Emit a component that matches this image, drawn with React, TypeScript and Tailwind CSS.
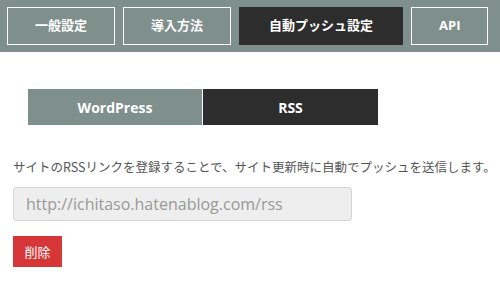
export default function App() {
  const tabs = ["一般設定", "導入方法", "自動プッシュ設定", "API"];
  const active = "自動プッシュ設定";

  return (
    <div className="w-[500px] h-[285px] bg-white font-['Open_Sans','Noto_Sans_CJK_JP',sans-serif]">
      {/* Top tabs */}
      <div className="h-[52px] bg-[#7f908c] flex gap-2 pl-[7px] pt-[7px]">
        {tabs.map((t) => (
          <div
            key={t}
            className={
              t === active
                ? "h-[38px] px-[30px] flex items-center bg-[#2d2d2d] text-white text-[13px] font-bold"
                : "h-[38px] px-[27px] flex items-center border border-white text-white text-[13px] font-bold"
            }
          >
            {t}
          </div>
        ))}
      </div>

      {/* Segmented control */}
      <div className="mt-[37px] ml-[28px] flex w-[350px] h-[36px]">
        <div className="w-[175px] flex items-center justify-center bg-[#7f908c] text-white text-[14px] font-bold border-r border-white">
          WordPress
        </div>
        <div className="flex-1 flex items-center justify-center bg-[#2d2d2d] text-white text-[14px] font-bold">
          RSS
        </div>
      </div>

      {/* RSS form */}
      <div className="px-[13px] pt-[32px]">
        <p className="text-[12.5px] leading-[20px] text-[#555] font-['Noto_Sans_CJK_JP',sans-serif] whitespace-nowrap">
          サイトのRSSリンクを登録することで、サイト更新時に自動でプッシュを送信します。
        </p>
        <input
          type="text"
          placeholder="http://ichitaso.hatenablog.com/rss"
          className="mt-[10px] w-[339px] h-[34px] px-3 rounded-[3px] bg-[#eeeeee] border border-[#d4d4d4] text-[16px] text-[#555] placeholder:text-[#999] outline-none"
        />
        <div className="mt-[15px]">
          <button className="w-[49px] h-[31px] bg-[#d63638] text-white text-[13px] font-['Noto_Sans_CJK_JP',sans-serif]">
            削除
          </button>
        </div>
      </div>
    </div>
  );
}
